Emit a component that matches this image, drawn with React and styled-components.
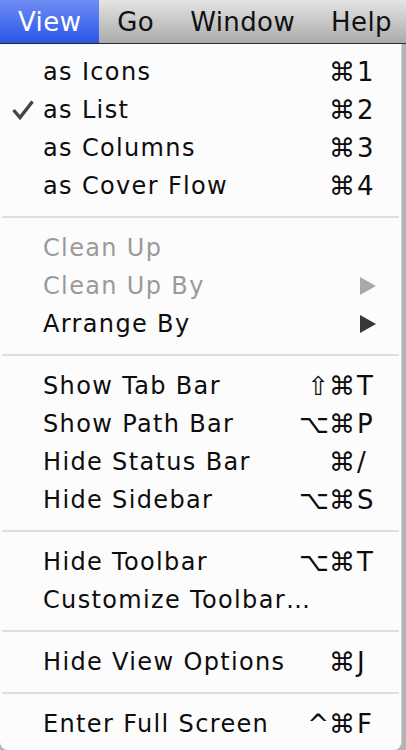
import React from 'react'
import styled, { createGlobalStyle } from 'styled-components'

const GlobalStyle = createGlobalStyle`
  html, body {
    margin: 0;
    padding: 0;
    background: #b4b4b4;
  }
  body {
    width: 406px;
    height: 750px;
    overflow: hidden;
    font-family: "DejaVu Sans", "Liberation Sans", sans-serif;
  }
`

const MenuBar = styled.div`
  display: flex;
  height: 43px;
  background: linear-gradient(#e4e4e4, #ababab);
  border-bottom: 1px solid #2a2a2a;
`

const BarItem = styled.div`
  display: flex;
  align-items: center;
  padding: 0 18px;
  font-size: 26px;
  letter-spacing: 0.4px;
  color: ${p => (p.$active ? '#fff' : '#111')};
  background: ${p => (p.$active ? 'linear-gradient(#6e8df3, #2a56e8)' : 'transparent')};
`

const Panel = styled.div`
  width: 402px;
  height: 706px;
  padding: 9px 0 10px;
  box-sizing: border-box;
  background: #fcfcfc;
  border-right: 1px solid #cfcfcf;
  border-radius: 0 0 8px 8px;
`

const Row = styled.div`
  display: flex;
  align-items: center;
  height: 38px;
  padding-right: 24px;
  font-size: 24px;
  letter-spacing: 1.35px;
  color: ${p => (p.$disabled ? '#9a9a9a' : '#0d0d0d')};
`

const Mark = styled.div`
  width: 43px;
  display: flex;
  padding-left: 12px;
  box-sizing: border-box;
`

const Label = styled.div`
  flex: 1;
  white-space: nowrap;
`

const Shortcut = styled.div`
  display: flex;
  font-size: 26px;
  letter-spacing: 0;
`

const Mods = styled.span`
  text-align: right;
`

const Key = styled.span`
  width: 20px;
  padding-left: 2px;
`

const Separator = styled.div`
  height: 2px;
  margin: 11px 2px;
  background: #dedede;
`

const CheckIcon = () => (
  <svg width="22" height="22" viewBox="0 0 22 22">
    <path d="M1.5 11 L8 18.5 L20.5 2.5" fill="none" stroke="#454545" strokeWidth="3.4" />
  </svg>
)

const Arrow = styled.svg`
  margin-right: 1px;
`

const SubArrow = ({ disabled }) => (
  <Arrow width="16" height="18" viewBox="0 0 16 18">
    <polygon points="0,0 16,9 0,18" fill={disabled ? '#a9a9a9' : '#383838'} />
  </Arrow>
)

const Item = ({ label, mods = '', keyChar, checked, disabled, submenu }) => (
  <Row $disabled={disabled}>
    <Mark>{checked && <CheckIcon />}</Mark>
    <Label>{label}</Label>
    {submenu && <SubArrow disabled={disabled} />}
    {keyChar && (
      <Shortcut>
        <Mods>{mods}</Mods>
        <Key>{keyChar}</Key>
      </Shortcut>
    )}
  </Row>
)

const App = () => (
  <>
    <GlobalStyle />
    <MenuBar>
      <BarItem $active>View</BarItem>
      <BarItem>Go</BarItem>
      <BarItem>Window</BarItem>
      <BarItem>Help</BarItem>
    </MenuBar>
    <Panel>
      <Item label="as Icons" mods="⌘" keyChar="1" />
      <Item label="as List" mods="⌘" keyChar="2" checked />
      <Item label="as Columns" mods="⌘" keyChar="3" />
      <Item label="as Cover Flow" mods="⌘" keyChar="4" />
      <Separator />
      <Item label="Clean Up" disabled />
      <Item label="Clean Up By" disabled submenu />
      <Item label="Arrange By" submenu />
      <Separator />
      <Item label="Show Tab Bar" mods="⇧⌘" keyChar="T" />
      <Item label="Show Path Bar" mods="⌥⌘" keyChar="P" />
      <Item label="Hide Status Bar" mods="⌘" keyChar="/" />
      <Item label="Hide Sidebar" mods="⌥⌘" keyChar="S" />
      <Separator />
      <Item label="Hide Toolbar" mods="⌥⌘" keyChar="T" />
      <Item label="Customize Toolbar…" />
      <Separator />
      <Item label="Hide View Options" mods="⌘" keyChar="J" />
      <Separator />
      <Item label="Enter Full Screen" mods="^⌘" keyChar="F" />
    </Panel>
  </>
)

export default App
